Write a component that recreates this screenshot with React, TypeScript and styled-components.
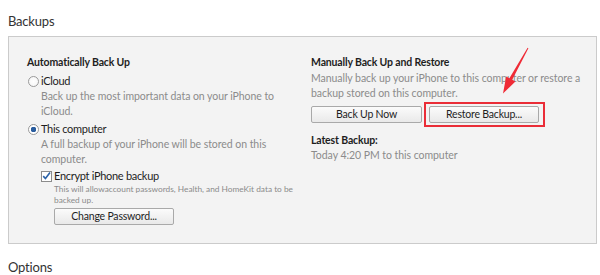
import React from "react";
import styled, { createGlobalStyle } from "styled-components";

const Global = createGlobalStyle`
  html, body { margin: 0; padding: 0; background: #ffffff; }
  body { font-family: Lato, "Noto Sans", "Liberation Sans", sans-serif; color: #222; }
  * { box-sizing: border-box; }
`;

const Page = styled.div`
  position: relative;
  width: 600px;
  height: 275px;
  overflow: hidden;
  padding: 0 8px 0 8px;
`;

const SectionTitle = styled.div<{ $top: number }>`
  margin-top: ${(p) => p.$top}px;
  font-size: 13px;
  letter-spacing: -0.2px;
  line-height: 18px;
  color: #333;
  height: 18px;
`;

const Panel = styled.div`
  margin-top: 6px;
  height: 208px;
  width: 589px;
  border: 1px solid #cbcbcb;
  background: #f3f3f3;
  display: grid;
  grid-template-columns: 284px 1fr;
  padding: 17px 0 0 18px;
`;

const Column = styled.div`
  display: flex;
  flex-direction: column;
  align-items: flex-start;
  white-space: nowrap;
`;

const Heading = styled.div`
  font-size: 10.5px;
  font-weight: 700;
  line-height: 16px;
  letter-spacing: -0.15px;
  color: #1e1e1e;
`;

const Option = styled.div<{ $gap: number; $indent?: number }>`
  margin-top: ${(p) => p.$gap}px;
  display: flex;
  align-items: center;
  gap: 2px;
  font-size: 11px;
  letter-spacing: -0.3px;
  line-height: 16px;
  color: #1e1e1e;
  padding-left: ${(p) => p.$indent ?? 1}px;
`;

const Radio = styled.span<{ $on?: boolean }>`
  width: 11px;
  height: 11px;
  border-radius: 50%;
  border: 1px solid #9a9a9a;
  background: radial-gradient(circle, ${(p) => (p.$on ? "#2a5d9e 0 2.6px, #ffffff 3px" : "#ffffff 0, #f4f4f4 100%")});
  flex: none;
`;

const Check = styled.span`
  width: 11px;
  height: 11px;
  border: 1px solid #8c8c8c;
  background: #ffffff;
  flex: none;
  display: flex;
  align-items: center;
  justify-content: center;
`;

const Desc = styled.div<{ $indent: number; $gap?: number }>`
  margin-top: ${(p) => p.$gap ?? 0}px;
  padding-left: ${(p) => p.$indent}px;
  font-size: 10.5px;
  letter-spacing: -0.05px;
  line-height: 14.5px;
  color: #8b8b8b;
`;

const SmallDesc = styled.div`
  padding-left: 27px;
  font-size: 8.3px;
  line-height: 11px;
  color: #8b8b8b;
`;

const Button = styled.button<{ $w: number }>`
  width: ${(p) => p.$w}px;
  height: 17px;
  padding: 0;
  border: 1px solid #a9a9a9;
  border-radius: 2px;
  background: linear-gradient(#fbfbfb, #e9e9e9);
  font-family: Lato, "Noto Sans", "Liberation Sans", sans-serif;
  font-size: 10.5px;
  letter-spacing: -0.2px;
  line-height: 15px;
  color: #1e1e1e;
  display: flex;
  align-items: center;
  justify-content: center;
`;

const IndentedButton = styled(Button)`
  margin-left: 27px;
  margin-top: 2px;
`;

const ButtonRow = styled.div`
  margin-top: 2px;
  display: flex;
  align-items: center;
  gap: 2px;
  height: 25px;
`;

const Highlight = styled.div`
  border: 2px solid #ea2d37;
  padding: 2px 4px 2px 3px;
  display: flex;
`;

const Latest = styled(Heading)`
  margin-top: 5px;
`;

const Arrow = styled.svg`
  position: absolute;
  left: 490px;
  top: 40px;
  width: 50px;
  height: 60px;
`;

export default function App() {
  return (
    <>
      <Global />
      <Page>
        <SectionTitle $top={12}>Backups</SectionTitle>
        <Panel>
          <Column>
            <Heading>Automatically Back Up</Heading>
            <Option $gap={3}>
              <Radio />
              iCloud
            </Option>
            <Desc $indent={14}>
              Back up the most important data on your iPhone to
              <br />
              iCloud.
            </Desc>
            <Option $gap={3}>
              <Radio $on />
              This computer
            </Option>
            <Desc $indent={14}>
              A full backup of your iPhone will be stored on this
              <br />
              computer.
            </Desc>
            <Option $gap={2} $indent={14}>
              <Check>
                <svg width="11" height="10" viewBox="0 0 11 10">
                  <path d="M1.5 5.2 L4.2 8 L9.8 0.8" fill="none" stroke="#2b62a8" strokeWidth="2" />
                </svg>
              </Check>
              Encrypt iPhone backup
            </Option>
            <SmallDesc>
              This will allowaccount passwords, Health, and HomeKit data to be
              <br />
              backed up.
            </SmallDesc>
            <IndentedButton $w={120}>Change Password...</IndentedButton>
          </Column>
          <Column>
            <Heading>Manually Back Up and Restore</Heading>
            <Desc $indent={0} $gap={1}>
              Manually back up your iPhone to this computer or restore a
              <br />
              backup stored on this computer.
            </Desc>
            <ButtonRow>
              <Button $w={111}>Back Up Now</Button>
              <Highlight>
                <Button $w={110}>Restore Backup...</Button>
              </Highlight>
            </ButtonRow>
            <Latest>Latest Backup:</Latest>
            <Desc $indent={0}>Today 4:20 PM to this computer</Desc>
          </Column>
        </Panel>
        <SectionTitle $top={14}>Options</SectionTitle>
        <Arrow viewBox="0 0 50 60">
          <polygon
            points="38.4,8.3 22.2,39.8 25.4,41.5 13,53.5 16.2,36.5 19.4,38.2 37.6,7.7"
            fill="#ef2b36"
          />
        </Arrow>
      </Page>
    </>
  );
}
